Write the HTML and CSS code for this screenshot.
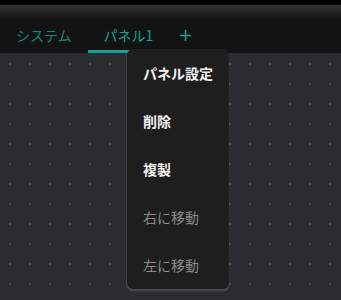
FILE: index.html
```html
<!DOCTYPE html>
<html lang="ja">
<head>
  <meta charset="UTF-8" />
  <title>パネル</title>
  <link rel="stylesheet" href="styles.css">
</head>
<body>
  <div class="topbar"></div>
  <nav class="tabs">
    <div class="tab">システム</div>
    <div class="tab active">パネル1</div>
    <div class="tab add">
      <svg width="11" height="11" viewBox="0 0 11 11"><path d="M5.5 0v11M0 5.5h11" stroke="currentColor" stroke-width="1.6"/></svg>
    </div>
  </nav>
  <main class="canvas"></main>

  <!-- メニュー -->
  <div class="menu">
    <div class="menu-item">パネル設定</div>
    <div class="menu-item">削除</div>
    <div class="menu-item">複製</div>
    <div class="menu-item disabled">右に移動</div>
    <div class="menu-item disabled">左に移動</div>
  </div>
</body>
</html>
```
FILE: styles.css
```css
:root {
  --bg: #2b2c30;
  --dot: #4b4c50;
  --bar: #131313;
  --teal: #14a394;
  --teal-dim: #12887b;
  --menu-bg: #1e1e1e;
}

html, body {
  height: 100%;
}

body {
  margin: 0;
  font-family: "Noto Sans CJK JP", "Noto Sans", sans-serif;
  background: var(--bg);
  display: flex;
  flex-direction: column;
  overflow: hidden;
}

.topbar {
  height: 5px;
  background: #000;
}

.tabs {
  height: 48px;
  display: flex;
  align-items: flex-end;
  background: linear-gradient(#343434, var(--bar) 14px);
}

.tab {
  height: 33px;
  line-height: 30px;
  padding: 0 16px;
  font-size: 14px;
  color: var(--teal-dim);
  border-bottom: 3px solid transparent;
  box-sizing: border-box;
}

.tab.active {
  color: var(--teal);
  border-bottom-color: var(--teal);
}

.tab.add {
  display: flex;
  align-items: center;
  padding: 0 0 0 11px;
  color: var(--teal);
}

.canvas {
  flex: 1;
  background-color: var(--bg);
  background-image: conic-gradient(at 2px 2px, transparent 75%, var(--dot) 0);
  background-size: 20px 20px;
  background-position: 9px 10px;
}

.menu {
  position: absolute;
  left: 127px;
  top: 49px;
  width: 102px;
  background: var(--menu-bg);
  border-radius: 6px;
  box-shadow: 0 2px 2px rgba(255, 255, 255, 0.16), -1px 0 0 rgba(255, 255, 255, 0.08);
}

.menu-item {
  height: 48px;
  line-height: 48px;
  padding-left: 16px;
  font-size: 14px;
  font-weight: bold;
  color: #f2f2f2;
}

.menu-item.disabled {
  font-weight: normal;
  color: #8a8a8a;
}
```
